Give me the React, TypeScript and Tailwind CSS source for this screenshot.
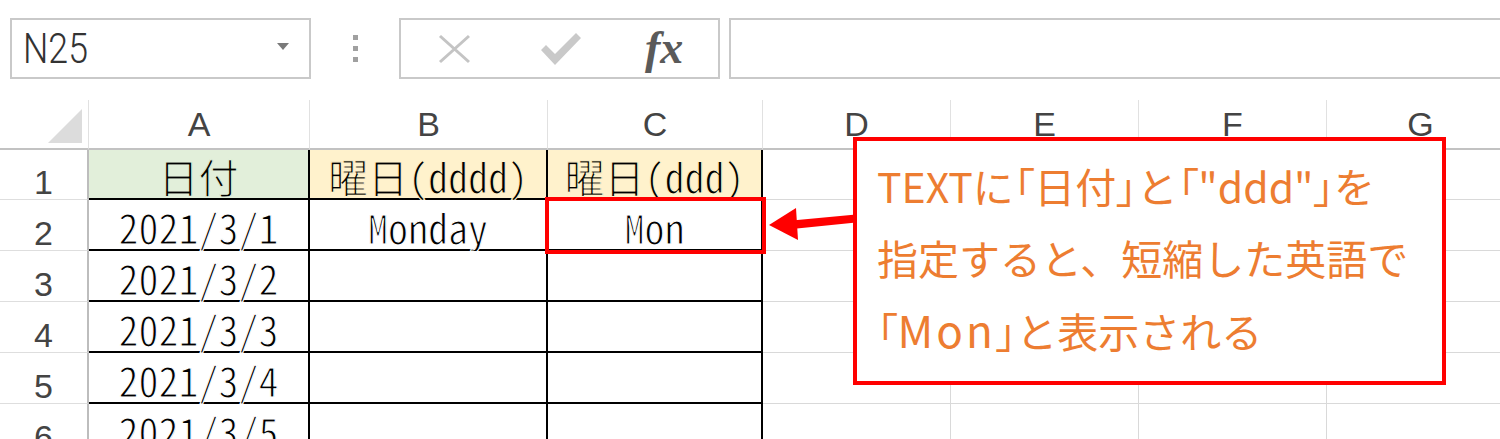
import React from "react";

const cellFont =
  "font-['Noto_Sans_Mono_CJK_JP','Noto_Sans_CJK_JP',monospace]";

type Cell = { text: string; bg: string; stroke: string };

const W = "bg-white";
const WS = "[-webkit-text-stroke:1.1px_#ffffff]";

const rows: { h: string; cells: Cell[] }[] = [
  {
    h: "h-[50px]",
    cells: [
      { text: "日付", bg: "bg-[#e2efda]", stroke: "[-webkit-text-stroke:1.1px_#e2efda]" },
      { text: "曜日(dddd)", bg: "bg-[#fff2cc]", stroke: "[-webkit-text-stroke:1.1px_#fff2cc]" },
      { text: "曜日(ddd)", bg: "bg-[#fff2cc]", stroke: "[-webkit-text-stroke:1.1px_#fff2cc]" },
    ],
  },
  {
    h: "h-[51px]",
    cells: [
      { text: "2021/3/1", bg: W, stroke: WS },
      { text: "Monday", bg: W, stroke: WS },
      { text: "Mon", bg: W, stroke: WS },
    ],
  },
  { h: "h-[51px]", cells: [{ text: "2021/3/2", bg: W, stroke: WS }, { text: "", bg: W, stroke: WS }, { text: "", bg: W, stroke: WS }] },
  { h: "h-[51px]", cells: [{ text: "2021/3/3", bg: W, stroke: WS }, { text: "", bg: W, stroke: WS }, { text: "", bg: W, stroke: WS }] },
  { h: "h-[51px]", cells: [{ text: "2021/3/4", bg: W, stroke: WS }, { text: "", bg: W, stroke: WS }, { text: "", bg: W, stroke: WS }] },
  { h: "h-[51px]", cells: [{ text: "2021/3/5", bg: W, stroke: WS }, { text: "", bg: W, stroke: WS }, { text: "", bg: W, stroke: WS }] },
];

const colLetters = ["A", "B", "C", "D", "E", "F", "G"];

function Br({ c }: { c: string }) {
  return <span className="[font-feature-settings:'palt']">{c}</span>;
}

export default function App() {
  return (
    <div className="relative w-[1500px] h-[439px] overflow-hidden bg-white">
      {/* Formula bar */}
      <div className="h-[100px] flex items-start pl-[10px] pt-[18px]">
        <div className="w-[301px] h-[61px] border-2 border-[#c9c9c9] flex items-center relative">
          <span className="ml-[11px] font-['Roboto'] font-light text-[42px] leading-none text-[#333] scale-x-[0.85] origin-left">
            N25
          </span>
          <svg className="absolute left-[265px] top-[23px]" width="12" height="7" viewBox="0 0 12 7">
            <path d="M0 0 H12 L6 7 Z" fill="#7a7a7a" />
          </svg>
        </div>
        <div className="w-[88px] h-[61px] flex flex-col items-center justify-center gap-[6px]">
          <div className="w-[5px] h-[5px] bg-[#a0a0a0]" />
          <div className="w-[5px] h-[5px] bg-[#a0a0a0]" />
          <div className="w-[5px] h-[5px] bg-[#a0a0a0]" />
        </div>
        <div className="w-[321px] h-[61px] border-2 border-[#c9c9c9] flex items-center pl-[37px]">
          <svg width="33" height="30" viewBox="0 0 33 30">
            <path d="M2 2 L31 28 M31 2 L2 28" stroke="#c4c4c4" strokeWidth="3" fill="none" />
          </svg>
          <svg className="ml-[70px]" width="40" height="32" viewBox="0 0 40 32">
            <path d="M0 17 L5 12 L14 21 L35 0 L40 5 L14 32 Z" fill="#c9c9c9" />
          </svg>
          <span className="ml-[64px] font-['Liberation_Serif'] italic font-bold text-[46px] leading-none text-[#5a5a5a] -mt-[2px]">
            fx
          </span>
        </div>
        <div className="ml-[9px] flex-1 h-[61px] border-l-2 border-y-2 border-[#c9c9c9]" />
      </div>

      {/* Grid */}
      <div className="grid grid-cols-[89px_221px_238px_215px_188px_188px_188px_188px] w-[1515px]">
        {/* header row */}
        <div className="h-[50px] border-b-2 border-r border-b-[#c2c2c2] border-r-[#e1e1e1] flex items-end justify-end pr-[6px] pb-[5px]">
          <svg width="34" height="34" viewBox="0 0 34 34">
            <path d="M34 0 V34 H0 Z" fill="#dcdcdc" />
          </svg>
        </div>
        {colLetters.map((l) => (
          <div
            key={l}
            className="h-[50px] border-b-2 border-r border-b-[#c2c2c2] border-r-[#e1e1e1] flex items-center justify-center font-['Liberation_Sans'] text-[34px] leading-none text-[#444]"
          >
            {l}
          </div>
        ))}

        {rows.map((r, ri) => (
          <React.Fragment key={ri}>
            <div
              className={`${r.h} border-r-2 border-b border-r-[#bdbdbd] border-b-[#dedede] flex items-end justify-center font-['Liberation_Sans'] text-[34px] leading-[34px] text-[#444]`}
            >
              {ri + 1}
            </div>
            {r.cells.map((c, ci) => (
              <div
                key={ci}
                className={`${r.h} ${c.bg} border-r-2 border-b-2 border-black flex items-end justify-center pb-[2px] overflow-visible`}
              >
                <span className={`${cellFont} ${c.stroke} text-[40px] leading-[40px] text-black whitespace-nowrap`}>
                  {c.text}
                </span>
              </div>
            ))}
            {[0, 1, 2, 3].map((k) => (
              <div key={k} className={`${r.h} border-r border-b border-[#d9d9d9]`} />
            ))}
          </React.Fragment>
        ))}
      </div>

      {/* Red highlight around C2 */}
      <div className="absolute left-[545px] top-[197px] w-[221px] h-[57px] border-4 border-[#ff0000]" />

      {/* Arrow */}
      <svg
        className="absolute left-[760px] top-[200px]"
        width="100"
        height="50"
        viewBox="760 200 100 50"
      >
        <path d="M856 214.5 L856 222.5 L792 229 L792 220.5 Z" fill="#ff0000" />
        <path d="M769 225 L796 208 L798 240 Z" fill="#ff0000" />
      </svg>

      {/* Callout */}
      <div className="absolute left-[853px] top-[137px] w-[593px] h-[248px] border-4 border-[#ff0000] bg-white pl-[20px] pt-[8px] font-['Noto_Sans_CJK_JP',sans-serif] font-normal text-[41px] leading-[72px] text-[#ed7d31] whitespace-nowrap">
        <div>
          TEXTに<Br c="「" />日付<Br c="」" />と<Br c="「" />"ddd"<Br c="」" />を
        </div>
        <div>指定すると、短縮した英語で</div>
        <div>
          <Br c="「" />
          <span className="text-[44px] tracking-[3px]">Mon</span>
          <Br c="」" />と表示される
        </div>
      </div>
    </div>
  );
}
